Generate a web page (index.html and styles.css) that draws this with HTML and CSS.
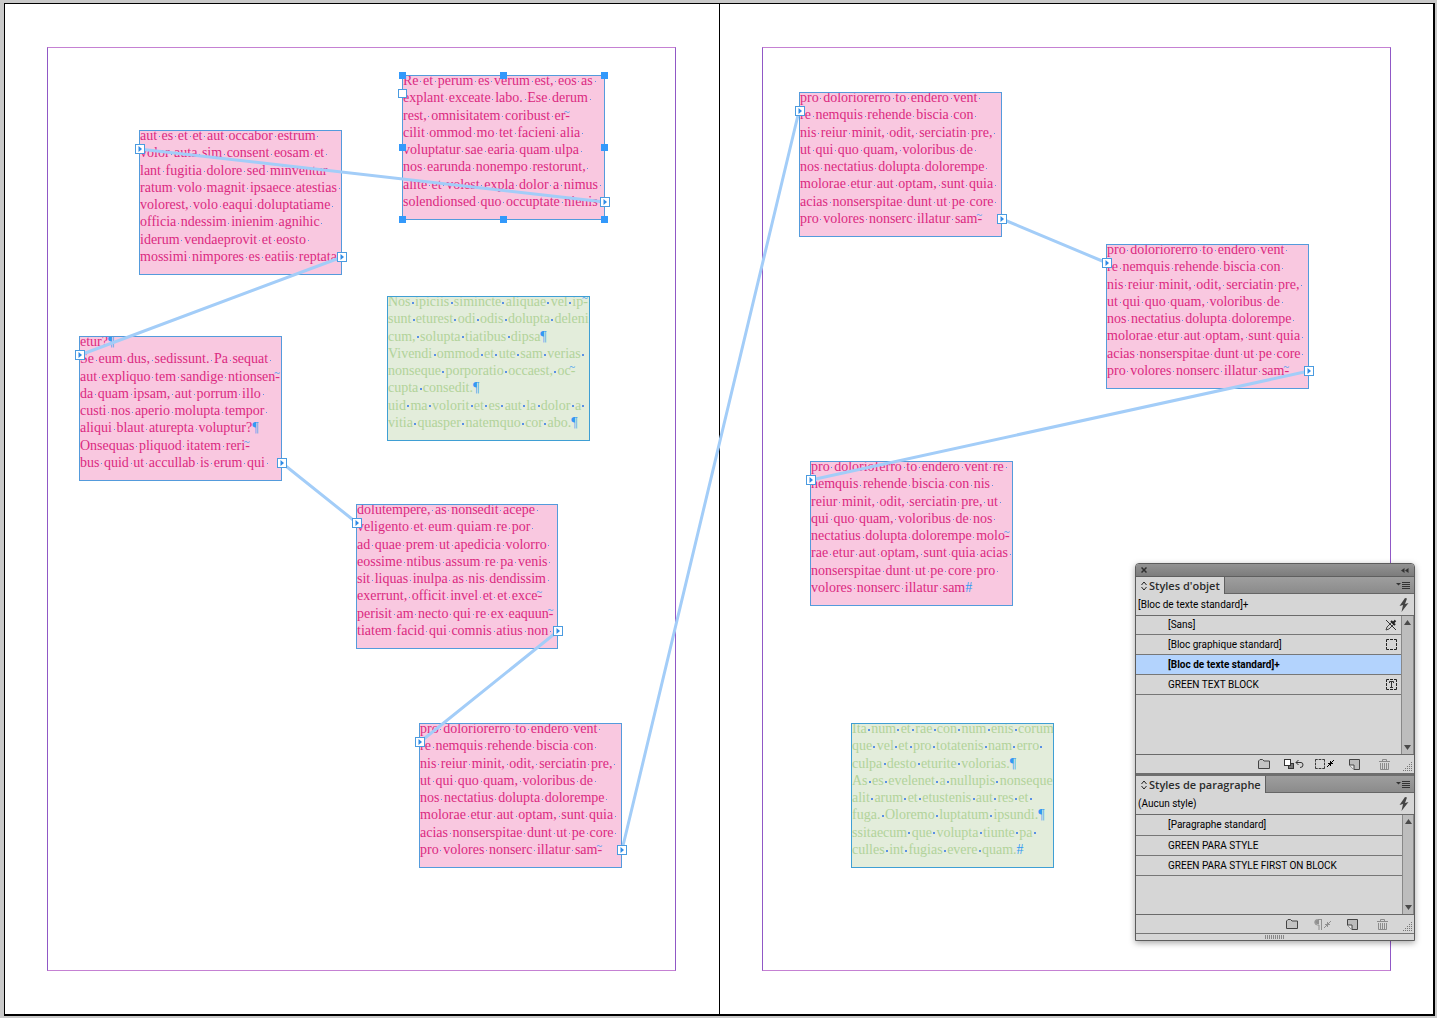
FILE: index.html
```html
<!DOCTYPE html>
<html lang="fr">
<head>
<meta charset="utf-8">
<title>Styles d'objet</title>
<link rel="stylesheet" href="styles.css">
</head>
<body>
<main class="pasteboard">
  <div class="spread">
    <section class="page"><div class="guides"></div></section>
    <section class="page"><div class="guides"></div></section>
  </div>

  <article class="frame frame-a">
    <p>Re et perum es verum est, eos as </p>
    <p>explant exceate labo. Ese derum </p>
    <p>rest, omnisitatem coribust er-<i class="soft">~</i></p>
    <p>cilit ommod mo tet facieni alia </p>
    <p>voluptatur sae earia quam ulpa </p>
    <p>nos earunda nonempo restorunt, </p>
    <p>alite et volest expla dolor a nimus </p>
    <p>solendionsed quo occuptate nienis </p>
  </article>
  <article class="frame frame-b">
    <p>aut es et et aut occabor estrum </p>
    <p>volor auta sim consent eosam et </p>
    <p>lant fugitia dolore sed minventur </p>
    <p>ratum volo magnit ipsaece atestias </p>
    <p>volorest, volo eaqui doluptatiame </p>
    <p>officia ndessim inienim agnihic </p>
    <p>iderum vendaeprovit et eosto </p>
    <p>mossimi nimpores es eatiis reptata </p>
  </article>
  <article class="frame frame-c">
    <p>etur?<i>¶</i></p>
    <p>Se eum dus, sedissunt. Pa sequat </p>
    <p>aut expliquo tem sandige ntionsen-<i class="soft">~</i></p>
    <p>da quam ipsam, aut porrum illo </p>
    <p>custi nos aperio molupta tempor </p>
    <p>aliqui blaut aturepta voluptur?<i>¶</i></p>
    <p>Onsequas pliquod itatem reri-<i class="soft">~</i></p>
    <p>bus quid ut accullab is erum qui </p>
  </article>
  <article class="frame green frame-d">
    <p>Nos ipiciis simincte aliquae vel ip-<i class="soft">~</i></p>
    <p>sunt eturest odi odis dolupta deleni </p>
    <p>cum, solupta tiatibus dipsa<i>¶</i></p>
    <p>Vivendi ommod et ute sam verias </p>
    <p>nonseque porporatio occaest, oc-<i class="soft">~</i></p>
    <p>cupta consedit.<i>¶</i></p>
    <p>uid ma volorit et es aut la dolor a </p>
    <p>vitia quasper natemquo cor abo.<i>¶</i></p>
  </article>
  <article class="frame frame-e">
    <p>dolutempere, as nonsedit acepe </p>
    <p>veligento et eum quiam re por </p>
    <p>ad quae prem ut apedicia volorro </p>
    <p>eossime ntibus assum re pa venis </p>
    <p>sit liquas inulpa as nis dendissim </p>
    <p>exerrunt, officit invel et et exce-<i class="soft">~</i></p>
    <p>perisit am necto qui re ex eaquun-<i class="soft">~</i></p>
    <p>tiatem facid qui comnis atius non </p>
  </article>
  <article class="frame frame-f">
    <p>pro doloriorerro to endero vent </p>
    <p>re nemquis rehende biscia con </p>
    <p>nis reiur minit, odit, serciatin pre, </p>
    <p>ut qui quo quam, voloribus de </p>
    <p>nos nectatius dolupta dolorempe </p>
    <p>molorae etur aut optam, sunt quia </p>
    <p>acias nonserspitae dunt ut pe core </p>
    <p>pro volores nonserc illatur sam-<i class="soft">~</i></p>
  </article>
  <article class="frame frame-g">
    <p>pro doloriorerro to endero vent </p>
    <p>re nemquis rehende biscia con </p>
    <p>nis reiur minit, odit, serciatin pre, </p>
    <p>ut qui quo quam, voloribus de </p>
    <p>nos nectatius dolupta dolorempe </p>
    <p>molorae etur aut optam, sunt quia </p>
    <p>acias nonserspitae dunt ut pe core </p>
    <p>pro volores nonserc illatur sam-<i class="soft">~</i></p>
  </article>
  <article class="frame frame-h">
    <p>pro doloriorerro to endero vent </p>
    <p>re nemquis rehende biscia con </p>
    <p>nis reiur minit, odit, serciatin pre, </p>
    <p>ut qui quo quam, voloribus de </p>
    <p>nos nectatius dolupta dolorempe </p>
    <p>molorae etur aut optam, sunt quia </p>
    <p>acias nonserspitae dunt ut pe core </p>
    <p>pro volores nonserc illatur sam-<i class="soft">~</i></p>
  </article>
  <article class="frame frame-i">
    <p>pro dolorioferro to endero vent re </p>
    <p>nemquis rehende biscia con nis </p>
    <p>reiur minit, odit, serciatin pre, ut </p>
    <p>qui quo quam, voloribus de nos </p>
    <p>nectatius dolupta dolorempe molo-<i class="soft">~</i></p>
    <p>rae etur aut optam, sunt quia acias </p>
    <p>nonserspitae dunt ut pe core pro </p>
    <p>volores nonserc illatur sam<i>#</i></p>
  </article>
  <article class="frame green frame-j">
    <p>Ita num et rae con num enis corum </p>
    <p>que vel et pro totatenis nam erro </p>
    <p>culpa desto eturite volorias.<i>¶</i></p>
    <p>As es evelenet a nullupis nonseque </p>
    <p>alit arum et etustenis aut res et </p>
    <p>fuga. Oloremo luptatum ipsundi.<i>¶</i></p>
    <p>ssitaecum que volupta tiunte pa </p>
    <p>culles int fugias evere quam.<i>#</i></p>
  </article>

  <svg class="threads" aria-hidden="true">
    <defs>
      <g id="port"><rect x="-4.500" y="-4.500" width="9" height="9" fill="#fff" stroke="#4a9be0"/><path d="M-1.500-3V3L2 0z" fill="#2f8be6"/></g>
      <rect id="knob" x="-3.500" y="-3.500" width="7" height="7" fill="#3399fb"/>
    </defs>
    <g stroke="#a3cdf8" stroke-width="3">
      <path d="M139 149L605 202M342 257L80 355M282 463L357 523M558 631L420 742M622 850L799 111M1002 219L1107 263M1309 371L811 480"/>
    </g>
    <use href="#knob" x="402.500" y="75.500"/><use href="#knob" x="503.500" y="75.500"/><use href="#knob" x="604.500" y="75.500"/>
    <use href="#knob" x="402.500" y="147.500"/><use href="#knob" x="604.500" y="147.500"/>
    <use href="#knob" x="402.500" y="219.500"/><use href="#knob" x="503.500" y="219.500"/><use href="#knob" x="604.500" y="219.500"/>
    <rect x="398.500" y="89.500" width="8" height="8" fill="#fff" stroke="#4a9be0"/>
    <use href="#port" x="605" y="202"/><use href="#port" x="140" y="149"/><use href="#port" x="342" y="257"/>
    <use href="#port" x="80" y="355"/><use href="#port" x="282" y="463"/><use href="#port" x="357" y="523"/>
    <use href="#port" x="558" y="631"/><use href="#port" x="420" y="742"/><use href="#port" x="622" y="850"/>
    <use href="#port" x="800" y="111"/><use href="#port" x="1002" y="219"/><use href="#port" x="1107" y="263"/>
    <use href="#port" x="1309" y="371"/><use href="#port" x="811" y="480"/>
  </svg>

  <svg class="sprites" aria-hidden="true">
    <symbol id="folder" viewBox="0 0 12 10"><path d="M.5 9.500V2L2 .5H4.500L6 2H11.500V9.500z" fill="#c4c4c4" stroke="#444"/></symbol>
    <symbol id="new" viewBox="0 0 11 11"><path d="M.5.5H10.500V10.500H5L.5 6z" fill="#bbb" stroke="#444"/><path d="M.5 6H5V10.500" fill="#eee" stroke="#444"/></symbol>
    <symbol id="trash" viewBox="0 0 11 11"><path d="M0 2.500H11M3.500 2V.5H7.500V2M1.500 4V10.500H9.500V4M3.500 4V10M5.500 4V10M7.500 4V10" fill="none" stroke="#8b8b8b"/></symbol>
    <symbol id="bolt" viewBox="0 0 10 14"><path d="M6 0L.5 8 4 7 2.500 14 9.500 5 6 6 8 .5z" fill="#444"/></symbol>
    <symbol id="menu" viewBox="0 0 14 9"><path d="M0 2H5L2.500 4.500z" fill="#333"/><path d="M6 1.500H14M6 3.500H14M6 5.500H14M6 7.500H14" stroke="#333"/></symbol>
    <symbol id="updown" viewBox="0 0 6 10"><path d="M.5 4L3 1 5.500 4M.5 6L3 9 5.500 6" fill="none" stroke="#222"/></symbol>
    <symbol id="up" viewBox="0 0 7 5"><path d="M0 5L3.500 0 7 5z" fill="#4a4a4a"/></symbol>
    <symbol id="down" viewBox="0 0 7 5"><path d="M0 0L3.500 5 7 0z" fill="#4a4a4a"/></symbol>
    <symbol id="corner" viewBox="0 0 10 10"><path d="M8.500 1V10M6.500 3V10M4.500 5V10M2.500 7V10M.5 9V10" stroke="#777" stroke-dasharray="1 1"/></symbol>
    <symbol id="star" viewBox="0 0 7 7"><path d="M0 7L7 0M1 3.500H6M3.500 1V6" stroke="currentColor" fill="none"/></symbol>
    <symbol id="box" viewBox="0 0 11 11"><path d="M.5 3V.5H3M4 .5H7M8 .5H10.500V3M10.500 4V7M10.500 8V10.500H8M7 10.500H4M3 10.500H.5V8M.5 7V4" fill="none" stroke="#222"/></symbol>
  </svg>

  <aside class="palette">
    <header class="titlebar">
      <button aria-label="Fermer"><svg width="6" height="6"><path d="M.5.5L5.500 5.500M5.500.5L.5 5.500" stroke="#2e2e2e" stroke-width="1.500"/></svg></button>
      <button aria-label="Réduire"><svg width="8" height="5"><path d="M3.500 0V5L0 2.500zM7.500 0V5L4 2.500z" fill="#333"/></svg></button>
    </header>

    <section class="panel">
      <div class="tabs">
        <h2><svg width="6" height="10"><use href="#updown"/></svg>Styles d'objet</h2>
        <button aria-label="Menu"><svg width="14" height="9"><use href="#menu"/></svg></button>
      </div>
      <div class="current"><span>[Bloc de texte standard]+</span><button aria-label="Application rapide"><svg width="10" height="14"><use href="#bolt"/></svg></button></div>
      <div class="listing">
        <ul>
          <li class="first"><button>[Sans]</button><svg width="12" height="12"><path d="M1 11L2 8 7 3 9 5 4 10z" fill="#d6d6d6" stroke="#444"/><path d="M6 2L10 6M8 4L10.500 1.500" stroke="#222" stroke-width="2"/><path d="M1 1L11 11" stroke="#333"/></svg></li>
          <li><button>[Bloc graphique standard]</button><svg width="11" height="11"><use href="#box"/></svg></li>
          <li class="selected"><button>[Bloc de texte standard]+</button></li>
          <li><button>GREEN TEXT BLOCK</button><svg width="11" height="11"><use href="#box"/><path d="M3.500 4V2.500H7.500V4M5.500 2.500V8M4 8.500H7" fill="none" stroke="#333"/></svg></li>
        </ul>
        <div class="scroll"><svg width="7" height="5"><use href="#up"/></svg><svg width="7" height="5"><use href="#down"/></svg></div>
      </div>
      <footer class="tools">
        <button aria-label="Nouveau groupe"><svg width="12" height="10"><use href="#folder"/></svg></button>
        <button aria-label="Effacer les remplacements"><svg width="20" height="11"><rect x="4.500" y="4.500" width="5" height="5" fill="#777" stroke="#333"/><rect x=".5" y=".5" width="6" height="6" fill="#fff" stroke="#333"/><path d="M14.500 1L12 3.500 14.500 6M12 3.500H17Q19 3.500 19 6 19 8.500 16 8.500" fill="none" stroke="#333"/></svg></button>
        <button aria-label="Effacer les attributs"><svg width="19" height="10"><svg width="10" height="10"><use href="#box"/></svg><svg x="12" y="1" width="7" height="7"><use href="#star"/></svg></svg></button>
        <button aria-label="Nouveau style"><svg width="11" height="11"><use href="#new"/></svg></button>
        <button aria-label="Supprimer"><svg width="11" height="11"><use href="#trash"/></svg></button>
        <svg class="corner" width="10" height="10"><use href="#corner"/></svg>
      </footer>
    </section>

    <section class="panel second">
      <div class="tabs">
        <h2><svg width="6" height="10"><use href="#updown"/></svg>Styles de paragraphe</h2>
        <button aria-label="Menu"><svg width="14" height="9"><use href="#menu"/></svg></button>
      </div>
      <div class="current"><span>(Aucun style)</span><button aria-label="Application rapide"><svg width="10" height="14"><use href="#bolt"/></svg></button></div>
      <div class="listing">
        <ul>
          <li><button>[Paragraphe standard]</button></li>
          <li><button>GREEN PARA STYLE</button></li>
          <li><button>GREEN PARA STYLE FIRST ON BLOCK</button></li>
        </ul>
        <div class="scroll"><svg width="7" height="5"><use href="#up"/></svg><svg width="7" height="5"><use href="#down"/></svg></div>
      </div>
      <footer class="tools">
        <button aria-label="Nouveau groupe"><svg width="12" height="10"><use href="#folder"/></svg></button>
        <button class="dim" aria-label="Effacer les remplacements"><svg width="17" height="11"><path d="M8 .5H3.500A2.500 2.500 0 0 0 3.500 6H5V11M7.500 0V11" fill="none" stroke="currentColor"/><path d="M5 1V5H3A2 2 0 0 1 3 1z" fill="currentColor"/><svg x="10" y="2" width="7" height="7"><use href="#star"/></svg></svg></button>
        <button aria-label="Nouveau style"><svg width="11" height="11"><use href="#new"/></svg></button>
        <button aria-label="Supprimer"><svg width="11" height="11"><use href="#trash"/></svg></button>
        <svg class="corner" width="10" height="10"><use href="#corner"/></svg>
      </footer>
    </section>
    <div class="grip"></div>
  </aside>
</main>
<script src="hidden-characters.js"></script>
</body>
</html>
```
FILE: styles.css
```css
* { box-sizing: border-box; }
body { margin: 0; background: #c9c9c9; }
h2, p, ul { margin: 0; padding: 0; }
button { border: 0; padding: 0; background: none; color: inherit; font: inherit; }
svg { display: block; flex: none; }

.pasteboard {
  position: relative;
  display: flex;
  min-height: 100vh;
  padding: 3px 2px 2px 4px;
  overflow: hidden;
}
.spread {
  flex: 1;
  display: flex;
  border: 1px solid #000;
  border-right-width: 2px;
  border-bottom-width: 2px;
  background: #fff;
}
.page { flex: 1; display: flex; padding: 43px 43px 43px 42px; }
.page + .page { border-left: 1px solid #000; padding-right: 42px; }
.guides { flex: 1; border: 1px solid #c581d3; border-left-color: #9058c6; border-right-color: #9058c6; }

/* Text frames, placed freely on the spread */
.frame {
  position: absolute;
  width: 203px;
  height: 145px;
  border: 1px solid #549bdc;
  background: #f9c8e0;
  color: #db2a80;
  overflow: hidden;
  font: 14px/17px "Liberation Serif", serif;
  white-space: pre;
  display: flex;
  flex-direction: column;
  justify-content: space-between;
  padding-bottom: 9px;
}
.frame p:first-child { margin-top: -4px; }
.green { background: #e3eddb; color: #b2d39a; border-color: #3f9fd4; }
.frame i { font-style: normal; color: #3399f3; }
.frame .soft { display: inline-block; width: 0; height: 9px; font-size: 11px; line-height: 9px; vertical-align: top; direction: rtl; }
.space { padding-right: 1px; background: linear-gradient(#5a90e4, #5a90e4) 50% 60% / 1px 1px no-repeat; }
.green .space { background-size: 2px 2px; }
.frame-a { left: 402px; top: 75px; }
.frame-b { left: 139px; top: 130px; }
.frame-c { left: 79px; top: 336px; }
.frame-d { left: 387px; top: 296px; }
.frame-e { left: 356px; top: 504px; width: 202px; }
.frame-f { left: 419px; top: 723px; }
.frame-g { left: 799px; top: 92px; }
.frame-h { left: 1106px; top: 244px; }
.frame-i { left: 810px; top: 461px; }
.frame-j { left: 851px; top: 723px; }

.threads { position: absolute; inset: 0; width: 100%; height: 100%; }
.sprites { position: absolute; width: 0; height: 0; }

/* Floating palette */
.palette {
  position: absolute;
  right: 22px;
  top: 563px;
  width: 280px;
  border: 1px solid #5c5c5c;
  border-radius: 4px 4px 0 0;
  background: #d6d6d6;
  color: #000;
  font: 10px/14px Roboto, sans-serif;
  box-shadow: 0 2px 6px rgba(0, 0, 0, .35);
}
.titlebar {
  display: flex;
  justify-content: space-between;
  align-items: center;
  height: 13px;
  padding: 0 5px;
  border-bottom: 1px solid #5f5f5f;
  border-radius: 3px 3px 0 0;
  background: linear-gradient(#939393, #7c7c7c);
}
.tabs {
  display: flex;
  justify-content: space-between;
  height: 17px;
  padding-right: 4px;
  background: linear-gradient(#9e9e9e, #8a8a8a);
  box-shadow: inset 0 -1px #666;
}
.tabs h2 {
  display: flex;
  align-items: center;
  gap: 2px;
  padding: 0 4px 0 5px;
  border-right: 1px solid #5f5f5f;
  background: #d6d6d6;
  color: #2c2c2c;
  font: 600 11px/16px "Open Sans", sans-serif;
}
.current {
  display: flex;
  justify-content: space-between;
  align-items: center;
  height: 22px;
  padding: 0 5px 0 2px;
  border-bottom: 1px solid #6a6a6a;
}
.listing { display: flex; height: 139px; border-bottom: 1px solid #6a6a6a; }
.listing ul { flex: 1; list-style: none; }
.listing li {
  display: flex;
  align-items: center;
  height: 20px;
  padding-right: 4px;
  border-bottom: 1px solid #777;
}
.listing .first { height: 19px; }
.listing li button { flex: 1; padding-left: 32px; text-align: left; }
.listing .selected { background: #b3d3fd; font-weight: 700; }
.scroll {
  display: flex;
  flex-direction: column;
  justify-content: space-between;
  align-items: center;
  width: 13px;
  padding: 4px 0;
  border-left: 1px solid #888;
  border-right: 1px solid #888;
  background: #bdbdbd;
}
.tools { display: flex; justify-content: flex-end; align-items: center; height: 18px; }
.tools button { display: flex; justify-content: center; width: 30px; }
.tools .corner { margin: 4px 1px 0 4px; }
.dim { color: #909090; }
.second { border-top: 3px solid #6e6e6e; }
.second .listing { height: 100px; }
.second li:first-child { height: 21px; }
.second .scroll { width: 12px; }
.second .corner { margin-left: 6px; }
.grip {
  height: 7px;
  border-top: 1px solid #777;
  background: repeating-linear-gradient(90deg, #888 0 1px, transparent 1px 2px) center / 20px 4px no-repeat;
}
```
FILE: hidden-characters.js
```js
// Shows each space inside a text frame as a small dot.
document.querySelectorAll('.frame p').forEach(function (line) {
  Array.from(line.childNodes).forEach(function (node) {
    if (node.nodeType !== Node.TEXT_NODE) return;
    var parts = document.createDocumentFragment();
    node.data.split(/( )/).forEach(function (part) {
      if (part === ' ') {
        var space = document.createElement('span');
        space.className = 'space';
        space.textContent = ' ';
        parts.append(space);
      } else if (part) {
        parts.append(part);
      }
    });
    node.replaceWith(parts);
  });
});
```
